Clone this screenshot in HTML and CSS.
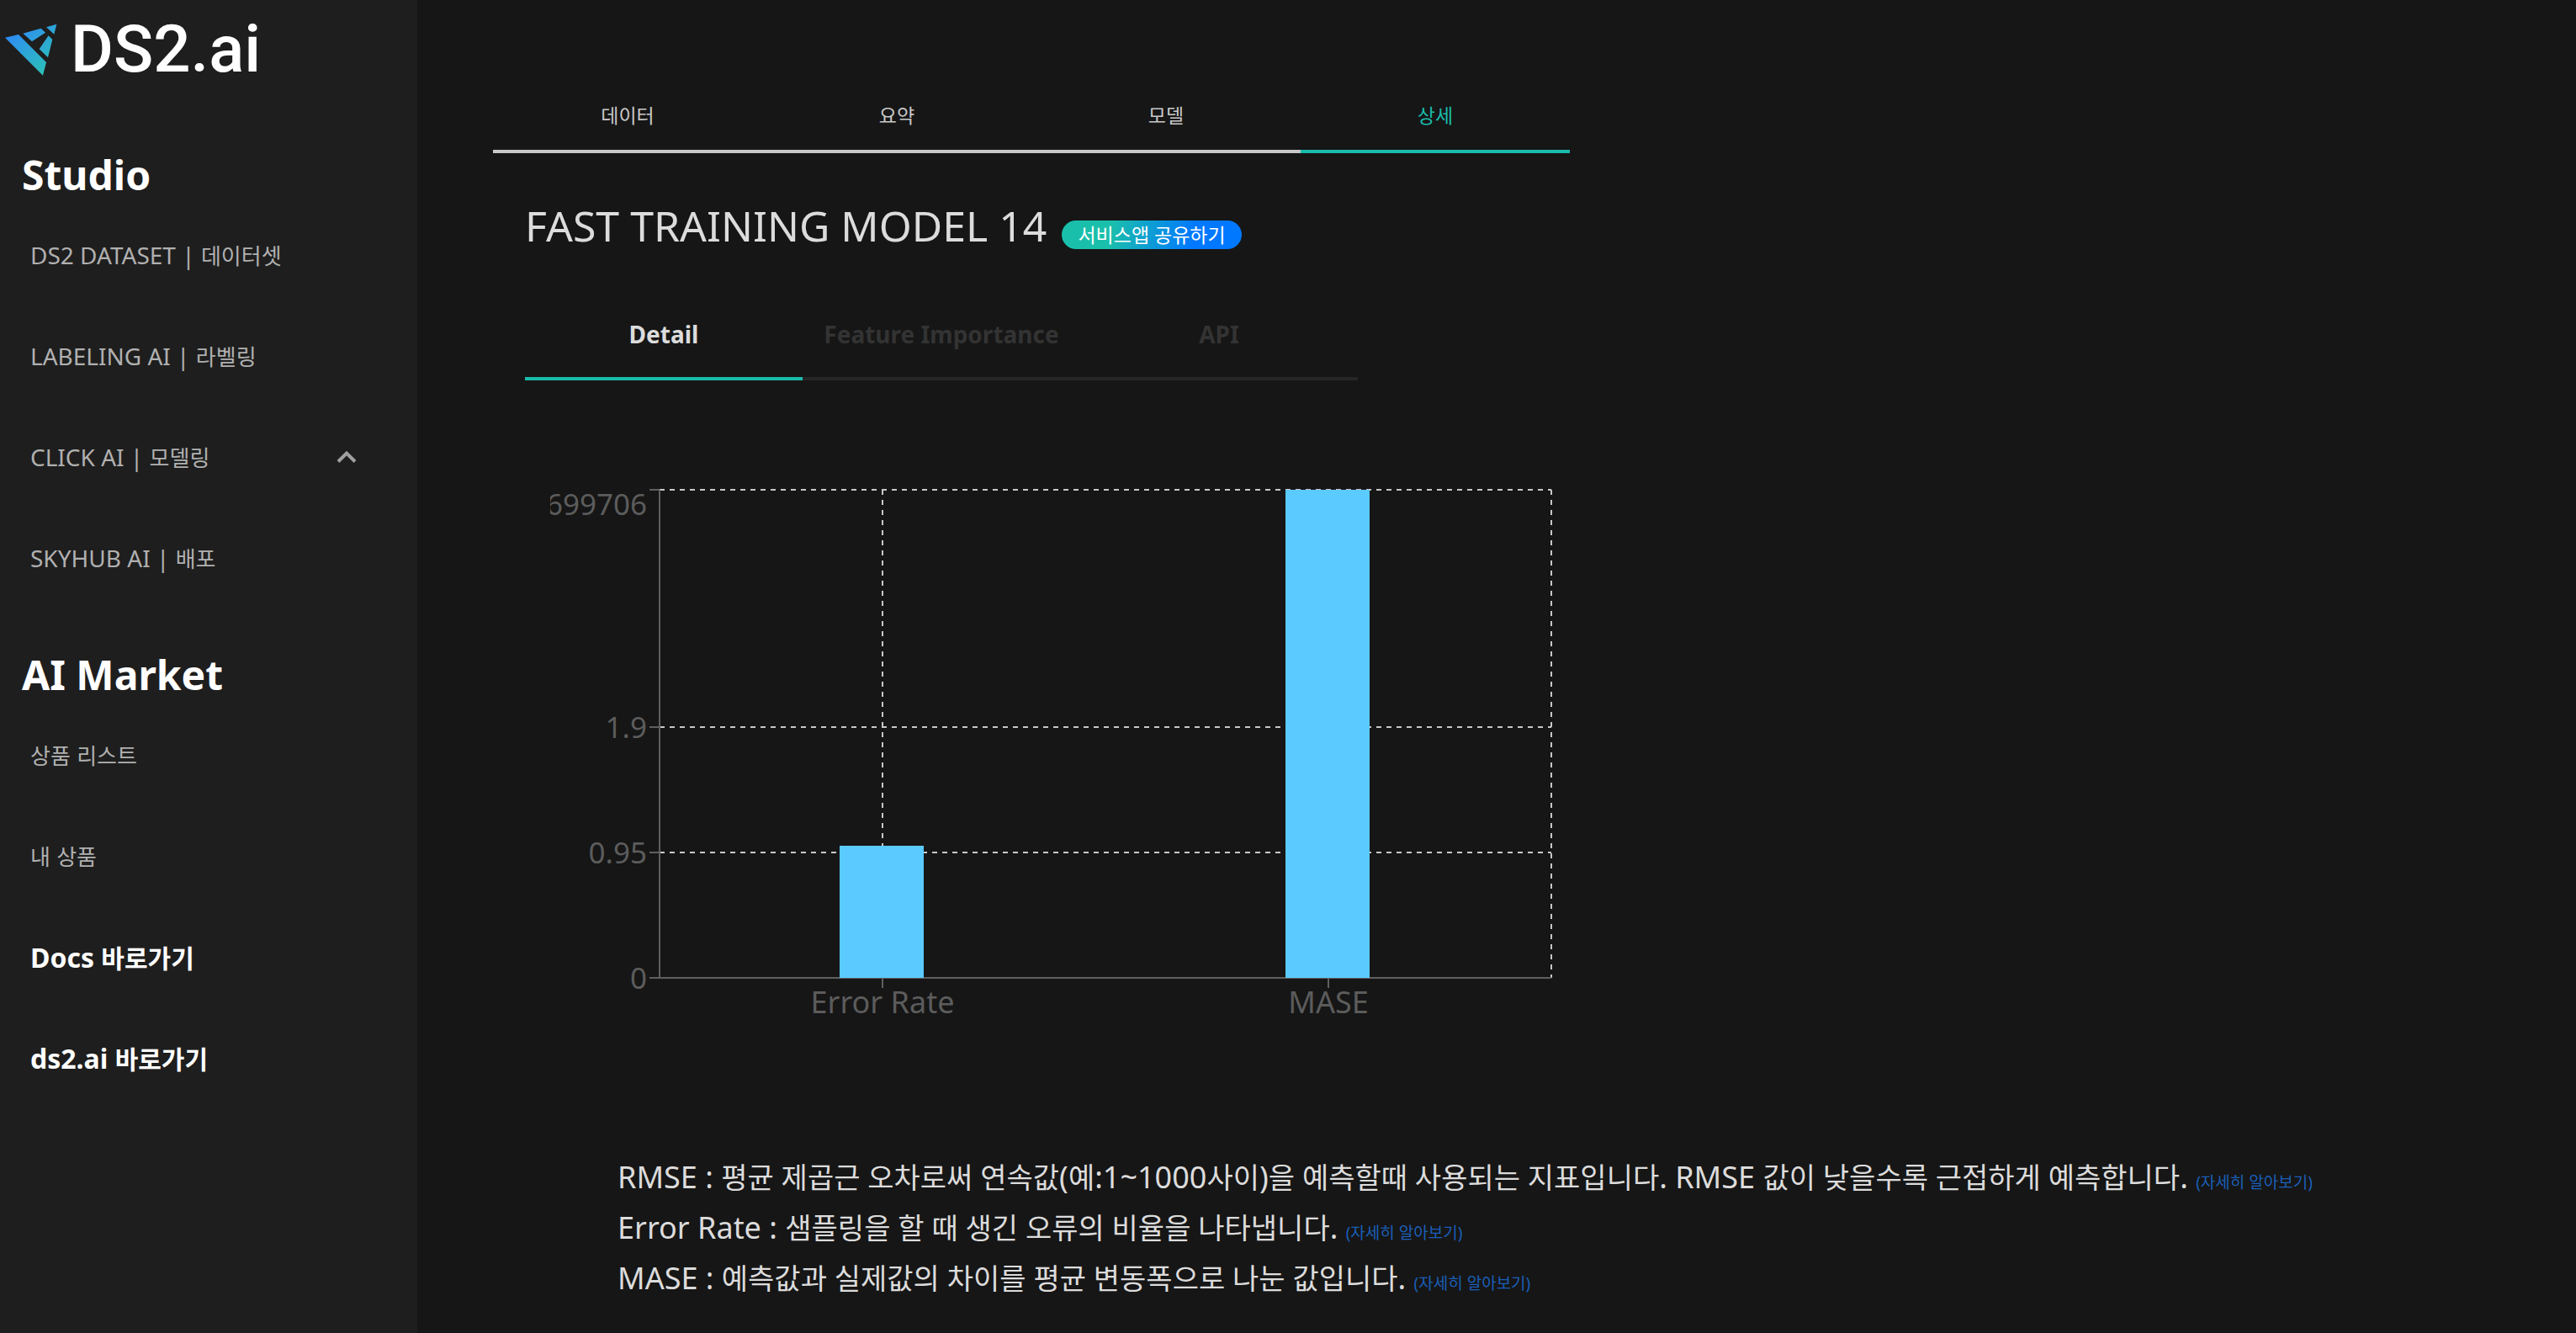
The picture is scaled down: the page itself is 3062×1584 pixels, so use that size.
FILE: index.html
```html
<!DOCTYPE html>
<html lang="ko">
<head>
<meta charset="utf-8">
<meta name="viewport" content="width=device-width, initial-scale=1">
<title>DS2.ai</title>
<link rel="stylesheet" href="styles.css">
</head>
<body>
<div class="app">
  <aside class="sidebar">
    <a class="logo" href="#">
      <svg class="logo-mark" viewBox="18 84 186 186" aria-hidden="true">
        <defs>
          <linearGradient id="mark" gradientUnits="userSpaceOnUse" x1="50" y1="110" x2="170" y2="250">
            <stop offset="0" stop-color="#2f8cf4"/>
            <stop offset="1" stop-color="#2cc0b8"/>
          </linearGradient>
        </defs>
        <g fill="url(#mark)">
          <path d="M18 134 66 123 165 222 153 269Z"/>
          <path d="M82 119 146 101 162 116 114 148Z"/>
          <path d="M165 97 202 86 193 122Z"/>
          <path d="M173 127 187 141 171 205 140 175Z"/>
        </g>
      </svg>
      <span class="logo-text">DS2.ai</span>
    </a>
    <nav class="nav">
      <h2 class="nav-title">Studio</h2>
      <ul class="nav-list">
        <li><a class="nav-link" href="#"><span>DS2 DATASET | <span class="ko">데이터셋</span></span></a></li>
        <li><a class="nav-link" href="#"><span>LABELING AI | <span class="ko">라벨링</span></span></a></li>
        <li><a class="nav-link" href="#"><span>CLICK AI | <span class="ko">모델링</span></span>
          <svg class="chevron" viewBox="0 0 24 16" aria-hidden="true"><path d="M2 13.500 12 3.500 22 13.500" fill="none" stroke="currentColor" stroke-width="4"/></svg></a></li>
        <li><a class="nav-link" href="#"><span>SKYHUB AI | <span class="ko">배포</span></span></a></li>
      </ul>
      <h2 class="nav-title">AI Market</h2>
      <ul class="nav-list">
        <li><a class="nav-link" href="#"><span><span class="ko">상품</span> <span class="ko">리스트</span></span></a></li>
        <li><a class="nav-link" href="#"><span><span class="ko">내</span> <span class="ko">상품</span></span></a></li>
        <li><a class="nav-link nav-link-strong" href="#"><span>Docs <span class="ko">바로가기</span></span></a></li>
        <li><a class="nav-link nav-link-strong" href="#"><span>ds2.ai <span class="ko">바로가기</span></span></a></li>
      </ul>
    </nav>
  </aside>

  <main class="main">
    <div class="steps">
      <button class="step" type="button">데이터</button>
      <button class="step" type="button">요약</button>
      <button class="step" type="button">모델</button>
      <button class="step step-active" type="button">상세</button>
    </div>

    <section class="content">
      <div class="title-row">
        <h1 class="title">FAST TRAINING MODEL 14</h1>
        <button class="share" type="button">서비스앱 공유하기</button>
      </div>

      <div class="tabs" role="tablist">
        <button class="tab tab-active" type="button" role="tab" aria-selected="true">Detail</button>
        <button class="tab" type="button" role="tab" aria-selected="false">Feature Importance</button>
        <button class="tab" type="button" role="tab" aria-selected="false">API</button>
      </div>

      <svg class="chart" viewBox="0 0 1200 650" role="img" aria-label="Error Rate, MASE">
        <g class="grid">
          <path d="M130 10H1190"/>
          <path d="M130 292H1190"/>
          <path d="M130 441H1190"/>
          <path d="M395 10V590"/>
          <path d="M925 10V590"/>
          <path d="M1190 10V590"/>
        </g>
        <g class="axis">
          <path d="M130 10V590"/>
          <path d="M130 590H1190"/>
          <path d="M118 10H130M118 292H130M118 441H130M118 590H130"/>
          <path d="M395 590V602M925 590V602"/>
        </g>
        <g class="bars">
          <rect x="344" y="433" width="100" height="157"/>
          <rect x="874" y="10" width="100" height="580"/>
        </g>
        <g class="label label-y">
          <text x="115" y="40">699706</text>
          <text x="115" y="305">1.9</text>
          <text x="115" y="454">0.95</text>
          <text x="115" y="603">0</text>
        </g>
        <g class="label label-x">
          <text x="395" y="632">Error Rate</text>
          <text x="925" y="632">MASE</text>
        </g>
      </svg>

      <div class="notes">
        <p>RMSE : <span class="ko">평균 제곱근 오차로써 연속값</span>(<span class="ko">예</span>:1~1000<span class="ko">사이</span>)<span class="ko">을 예측할때 사용되는 지표입니다</span>. RMSE <span class="ko">값이 낮을수록 근접하게 예측합니다</span>. <a class="more" href="#">(자세히 알아보기)</a></p>
        <p>Error Rate : <span class="ko">샘플링을 할 때 생긴 오류의 비율을 나타냅니다</span>. <a class="more" href="#">(자세히 알아보기)</a></p>
        <p>MASE : <span class="ko">예측값과 실제값의 차이를 평균 변동폭으로 나눈 값입니다</span>. <a class="more" href="#">(자세히 알아보기)</a></p>
      </div>
    </section>
  </main>
</div>
</body>
</html>
```
FILE: styles.css
```css
* {
  box-sizing: border-box;
}

body {
  margin: 0;
  background: #161616;
  color: #dcdcdc;
  font-family: "Noto Sans", "Noto Sans CJK KR", sans-serif;
}

h1,
h2,
p,
ul {
  margin: 0;
  padding: 0;
}

ul {
  list-style: none;
}

a {
  color: inherit;
  text-decoration: none;
}

button {
  border: 0;
  padding: 0;
  background: none;
  color: inherit;
  font-family: inherit;
  cursor: pointer;
}

.ko {
  line-height: 1;
}

.app {
  display: flex;
  min-height: 100vh;
}

/* Sidebar */
.sidebar {
  flex: 0 0 496px;
  background: #1e1e1e;
}

.logo {
  display: flex;
  align-items: center;
  gap: 16px;
  height: 118px;
  padding-left: 6px;
}

.logo-mark {
  width: 62px;
  height: 62px;
}

.logo-text {
  color: #fff;
  font-family: Roboto, sans-serif;
  font-size: 78px;
  font-weight: 500;
  line-height: 78px;
}

.nav {
  display: flex;
  flex-direction: column;
  padding-top: 55px;
}

.nav-title {
  padding-left: 26px;
  color: #fff;
  font-size: 48px;
  font-weight: 700;
  line-height: 70px;
}

.nav-list + .nav-title {
  margin-top: 44px;
}

.nav-link {
  display: flex;
  align-items: center;
  justify-content: space-between;
  height: 120px;
  padding: 0 72px 0 36px;
  color: #b0b0b0;
  font-size: 28px;
}

.nav-link .ko {
  font-size: 26px;
}

.nav-link-strong {
  color: #fff;
  font-size: 32px;
  font-weight: 700;
}

.nav-link-strong .ko {
  font-size: 30px;
}

.chevron {
  width: 24px;
  height: 16px;
  color: #a0a0a0;
}

/* Main column */
.main {
  flex: 1;
  min-width: 0;
  padding: 90px 90px 36px;
}

.steps {
  display: flex;
  max-width: 1280px;
}

.step {
  flex: 1;
  padding: 29px 0 23px;
  border-bottom: 4px solid #c8c8c8;
  color: #c8c8c8;
  font-size: 23px;
  line-height: 36px;
}

.step-active {
  border-color: #1abcac;
  color: #1abcac;
}

.content {
  padding: 52px 38px 0;
}

.title-row {
  display: flex;
  align-items: flex-end;
  gap: 18px;
}

.title {
  font-size: 50px;
  font-weight: 400;
  line-height: 68px;
}

.share {
  height: 34px;
  margin-bottom: 6px;
  padding: 0 19px;
  border-radius: 17px;
  background: linear-gradient(100deg, #1abfab 27%, #0078ff 73%);
  color: #fff;
  font-size: 23px;
  line-height: 32px;
}

.tabs {
  display: flex;
  max-width: 990px;
  margin-top: 42px;
}

.tab {
  flex: 1 1 0;
  padding: 35px 0 33px;
  border-bottom: 4px solid #262626;
  color: #333;
  font-size: 28px;
  font-weight: 700;
  line-height: 36px;
}

.tab-active {
  border-color: #1abcac;
  color: #dcdcdc;
}

/* Chart */
.chart {
  display: block;
  width: 100%;
  max-width: 1200px;
  margin: 120px 0 0 30px;
  overflow: hidden;
}

.grid path {
  fill: none;
  stroke: #c8c8c8;
  stroke-width: 2;
  stroke-dasharray: 6 6;
}

.axis path {
  fill: none;
  stroke: #5f5f5f;
  stroke-width: 2;
}

.bars {
  fill: #5acaff;
}

.label {
  fill: #5c5c5c;
  font-size: 36px;
}

.label-y {
  font-size: 35px;
  text-anchor: end;
}

.label-x {
  text-anchor: middle;
}

/* Metric notes */
.notes {
  margin-top: 147px;
  padding-left: 110px;
  font-size: 36px;
  line-height: 60px;
}

.notes .ko {
  font-size: 34px;
}

.more {
  color: #1a5fb8;
  font-size: 19px;
  line-height: 1;
}
```
